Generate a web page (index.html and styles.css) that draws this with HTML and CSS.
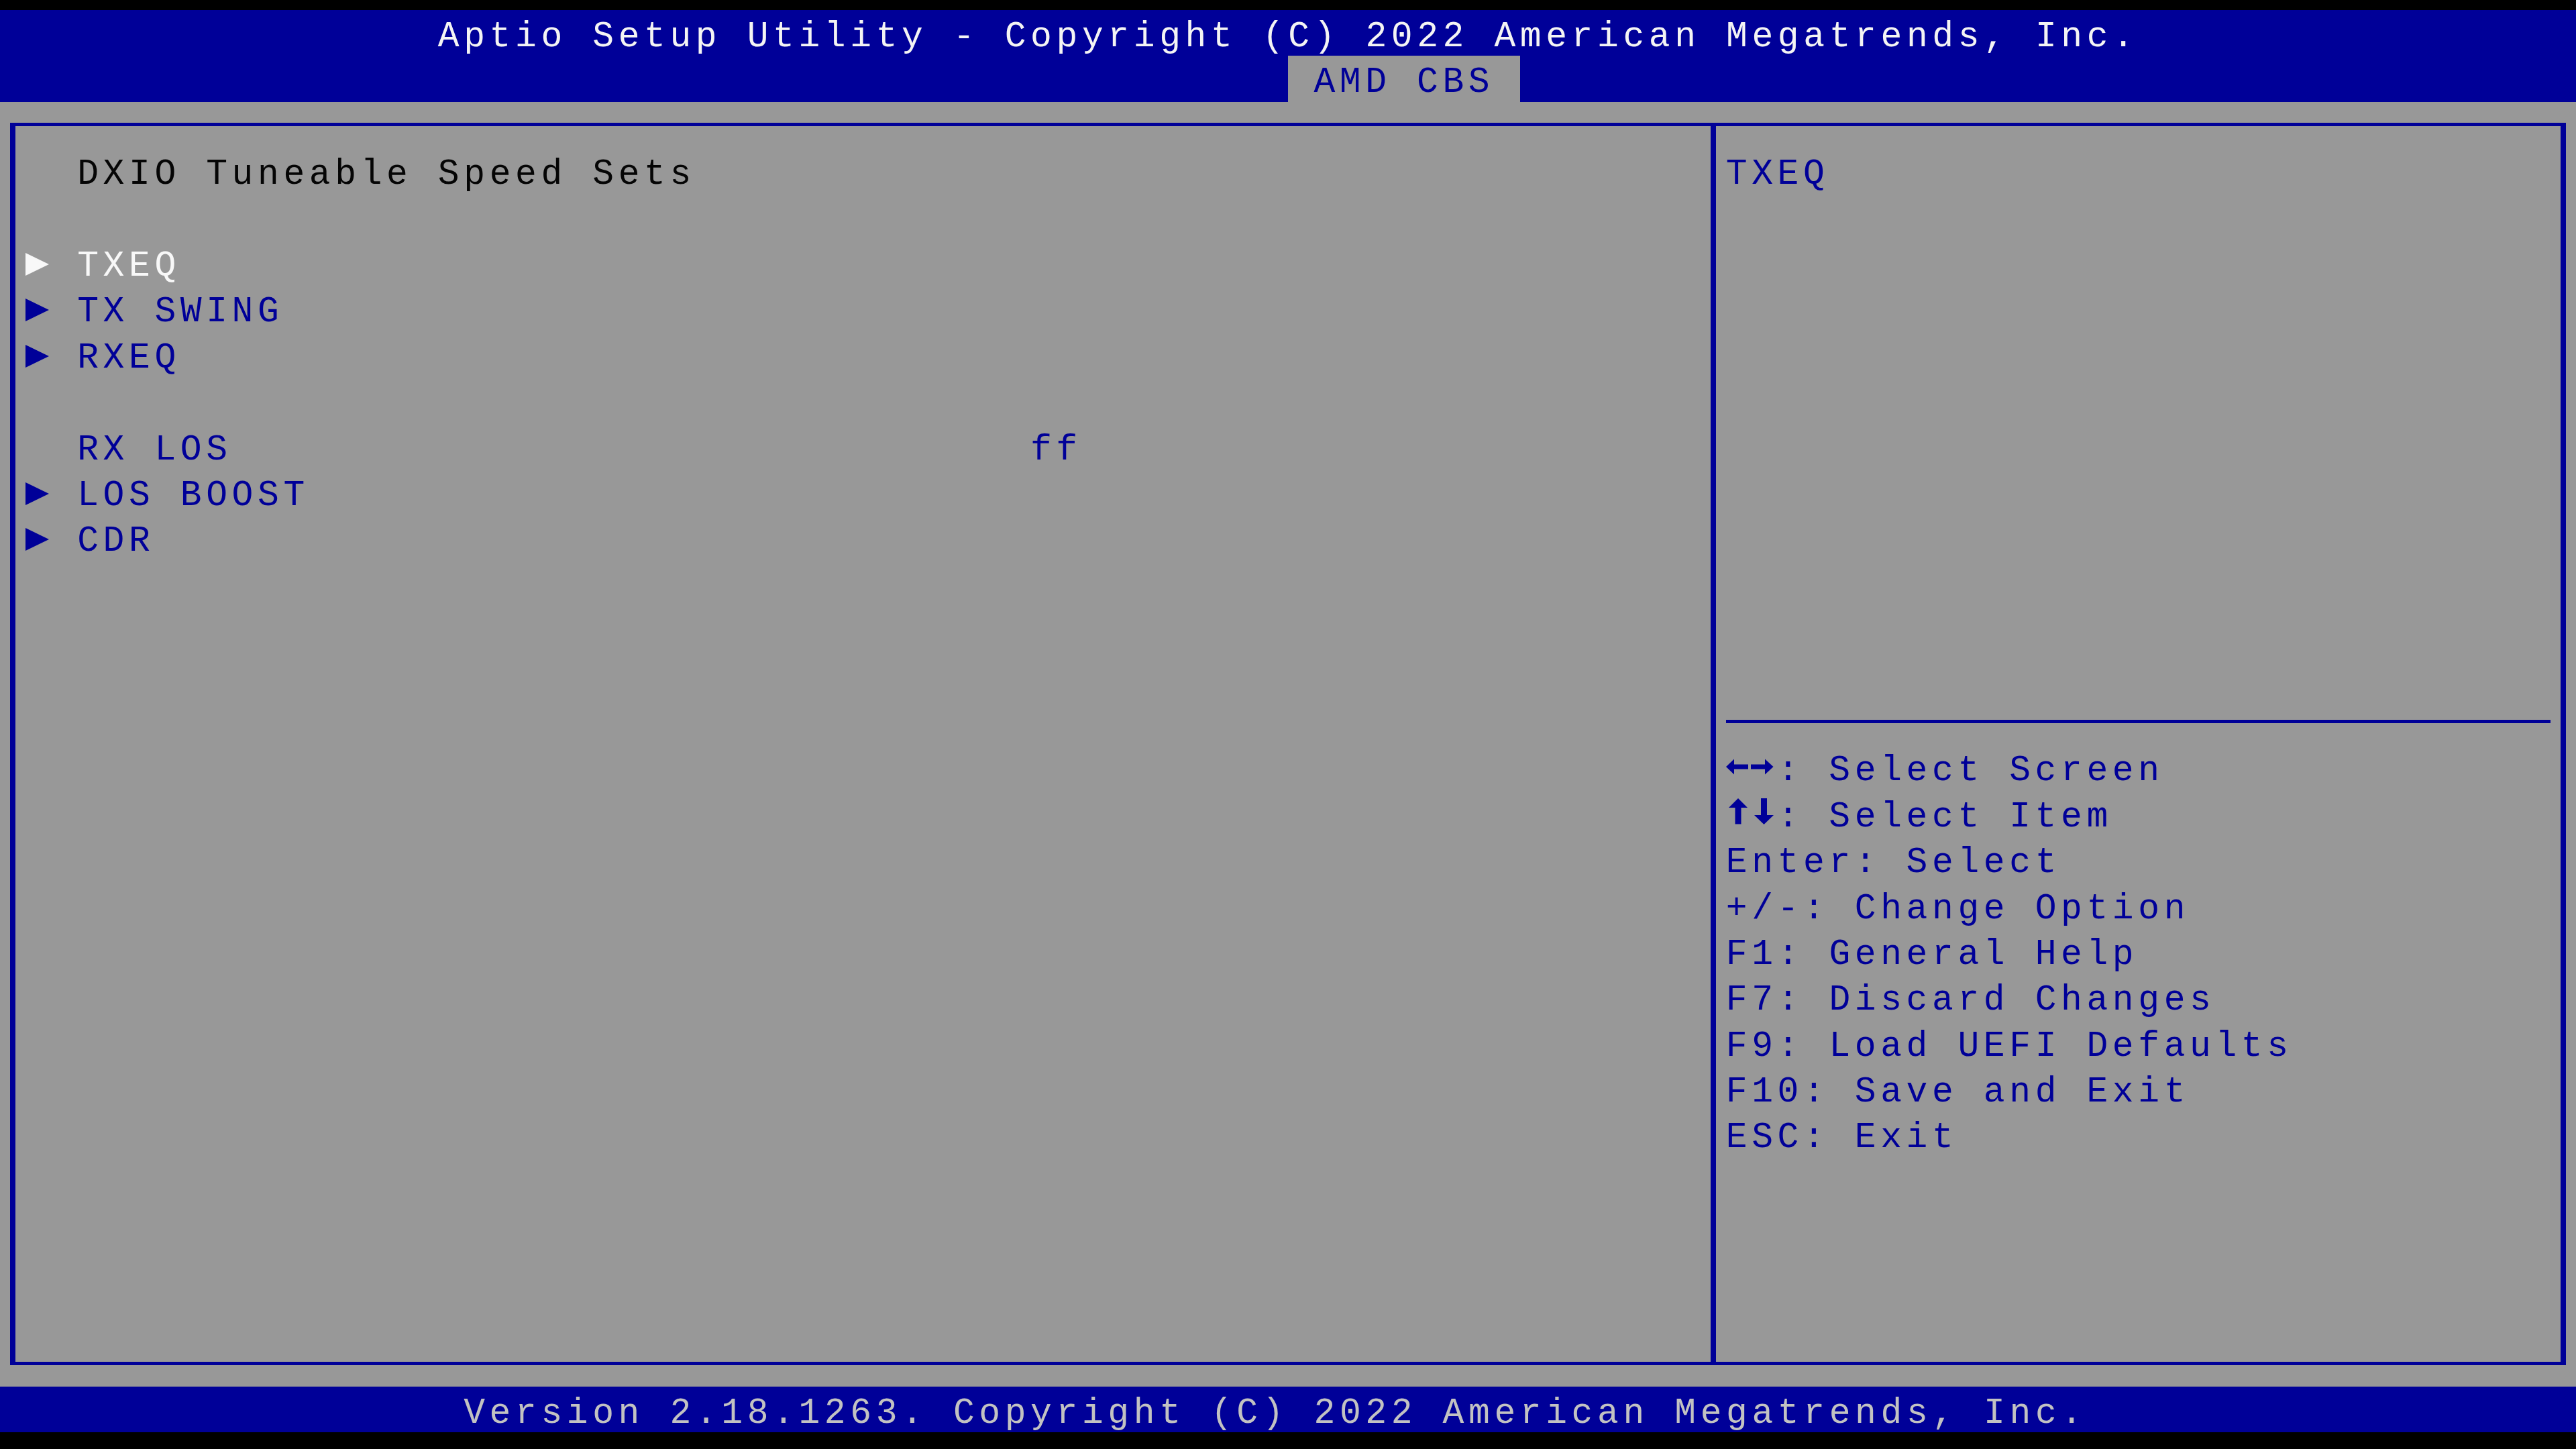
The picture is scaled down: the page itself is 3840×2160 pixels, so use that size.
FILE: index.html
```html
<!DOCTYPE html>
<html lang="en">
<head>
  <meta charset="UTF-8">
  <meta name="viewport" content="width=device-width, initial-scale=1.0">
  <title>Aptio Setup Utility - AMD CBS</title>
  <link rel="stylesheet" href="styles.css">
</head>
<body>
  <div class="screen">
    <header class="top">
      <div class="line title">Aptio Setup Utility - Copyright (C) 2022 American Megatrends, Inc.</div>
      <div class="tabs">
        <span class="tab">AMD CBS</span>
      </div>
    </header>

    <main class="work">
      <div class="frame">
        <section class="menu">
          <div class="line heading">DXIO Tuneable Speed Sets</div>
          <div class="line"></div>
          <div class="item selected">
            <svg class="mark" viewBox="0 0 38.4 68.4"><polygon points="0,20 35,37 0,54"/></svg>
            <span class="label">TXEQ</span>
          </div>
          <div class="item">
            <svg class="mark" viewBox="0 0 38.4 68.4"><polygon points="0,20 35,37 0,54"/></svg>
            <span class="label">TX SWING</span>
          </div>
          <div class="item">
            <svg class="mark" viewBox="0 0 38.4 68.4"><polygon points="0,20 35,37 0,54"/></svg>
            <span class="label">RXEQ</span>
          </div>
          <div class="line"></div>
          <div class="item">
            <span class="no-mark"></span>
            <span class="label">RX LOS</span>
            <span class="value">ff</span>
          </div>
          <div class="item">
            <svg class="mark" viewBox="0 0 38.4 68.4"><polygon points="0,20 35,37 0,54"/></svg>
            <span class="label">LOS BOOST</span>
          </div>
          <div class="item">
            <svg class="mark" viewBox="0 0 38.4 68.4"><polygon points="0,20 35,37 0,54"/></svg>
            <span class="label">CDR</span>
          </div>
        </section>

        <aside class="help">
          <div class="help-text">
            <div class="line">TXEQ</div>
          </div>
          <div class="sep"></div>
          <div class="key">
            <!-- left / right arrows -->
            <svg class="keys" viewBox="0 0 76.8 68.4">
              <polygon points="0,34 12,22.5 12,45.5"/>
              <rect x="11" y="30.5" width="22" height="7"/>
              <rect x="37" y="30.5" width="22" height="7"/>
              <polygon points="58,22.5 70.5,34 58,45.5"/>
            </svg>
            <span>: Select Screen</span>
          </div>
          <div class="key">
            <!-- up / down arrows -->
            <svg class="keys" viewBox="0 0 76.8 68.4">
              <polygon points="4,26 18,12 32,26"/>
              <rect x="13.5" y="25" width="9" height="25.5"/>
              <rect x="52" y="12" width="9" height="26"/>
              <polygon points="42,37 56.5,51 71,37"/>
            </svg>
            <span>: Select Item</span>
          </div>
          <div class="line">Enter: Select</div>
          <div class="line">+/-: Change Option</div>
          <div class="line">F1: General Help</div>
          <div class="line">F7: Discard Changes</div>
          <div class="line">F9: Load UEFI Defaults</div>
          <div class="line">F10: Save and Exit</div>
          <div class="line">ESC: Exit</div>
        </aside>
      </div>
    </main>

    <footer class="line bottom">Version 2.18.1263. Copyright (C) 2022 American Megatrends, Inc.</footer>
  </div>
</body>
</html>
```

FILE: styles.css
```css
* {
  margin: 0;
  padding: 0;
  box-sizing: border-box;
}

/* text grid: 100 columns x 31 rows */
:root {
  --cw: 38.4px;
  --rh: 68.4px;
  --bh: 5px;
  --bv: 8px;
  --blue: #000098;
  --gray: #989898;
}

html, body {
  width: 100%;
  height: 100%;
  background: #000;
}

body {
  font-family: "Liberation Mono", "DejaVu Sans Mono", monospace;
  font-size: 53px;
  letter-spacing: 6.6px;
  white-space: nowrap;
}

.screen {
  margin-top: 15px;
  height: calc(31 * var(--rh));
  display: flex;
  flex-direction: column;
}

.line {
  height: var(--rh);
  padding-top: 13px;
  line-height: 55px;
}

/* title bar */
.top {
  background: var(--blue);
  color: #f4f4f4;
}

.title {
  padding-left: calc(17 * var(--cw));
}

.tabs {
  display: flex;
  height: var(--rh);
  padding-left: calc(50 * var(--cw));
}

.tab {
  background: var(--gray);
  color: var(--blue);
  padding: 13px var(--cw) 0;
  line-height: 55px;
}

/* main area */
.work {
  background: var(--gray);
  height: calc(28 * var(--rh));
  padding: calc(var(--rh) / 2 - var(--bh) / 2) calc(var(--cw) / 2 - var(--bv) / 2);
}

.frame {
  height: 100%;
  display: flex;
  border: solid var(--blue);
  border-width: var(--bh) var(--bv);
}

.menu {
  width: calc(66 * var(--cw) - var(--bv));
  padding: calc(var(--rh) / 2 - var(--bh) / 2) 0 0 calc(var(--cw) / 2 - var(--bv) / 2);
  color: var(--blue);
}

.heading {
  padding-left: calc(2 * var(--cw));
  color: #050505;
}

.item {
  display: grid;
  grid-template-columns: calc(2 * var(--cw)) calc(37 * var(--cw)) 1fr;
  height: var(--rh);
}

.item > span {
  padding-top: 13px;
  line-height: 55px;
}

.mark {
  width: var(--cw);
  height: var(--rh);
  fill: var(--blue);
}

.item.selected {
  color: #f8f8f8;
}

.item.selected .mark {
  fill: #f8f8f8;
}

/* help column */
.help {
  flex: 1;
  border-left: var(--bv) solid var(--blue);
  padding: calc(var(--rh) / 2 - var(--bh) / 2) calc(var(--cw) / 2 - var(--bv) / 2) 0;
  color: var(--blue);
}

.help-text {
  height: calc(12 * var(--rh));
}

.sep {
  margin: calc(var(--rh) / 2 - var(--bh) / 2) 0;
  border-top: var(--bh) solid var(--blue);
}

.key {
  display: flex;
  height: var(--rh);
}

.key span {
  padding-top: 13px;
  line-height: 55px;
}

.keys {
  width: calc(2 * var(--cw));
  height: var(--rh);
  fill: var(--blue);
}

/* status bar */
.bottom {
  background: var(--blue);
  color: #c2c2c2;
  padding-left: calc(18 * var(--cw));
}
```
